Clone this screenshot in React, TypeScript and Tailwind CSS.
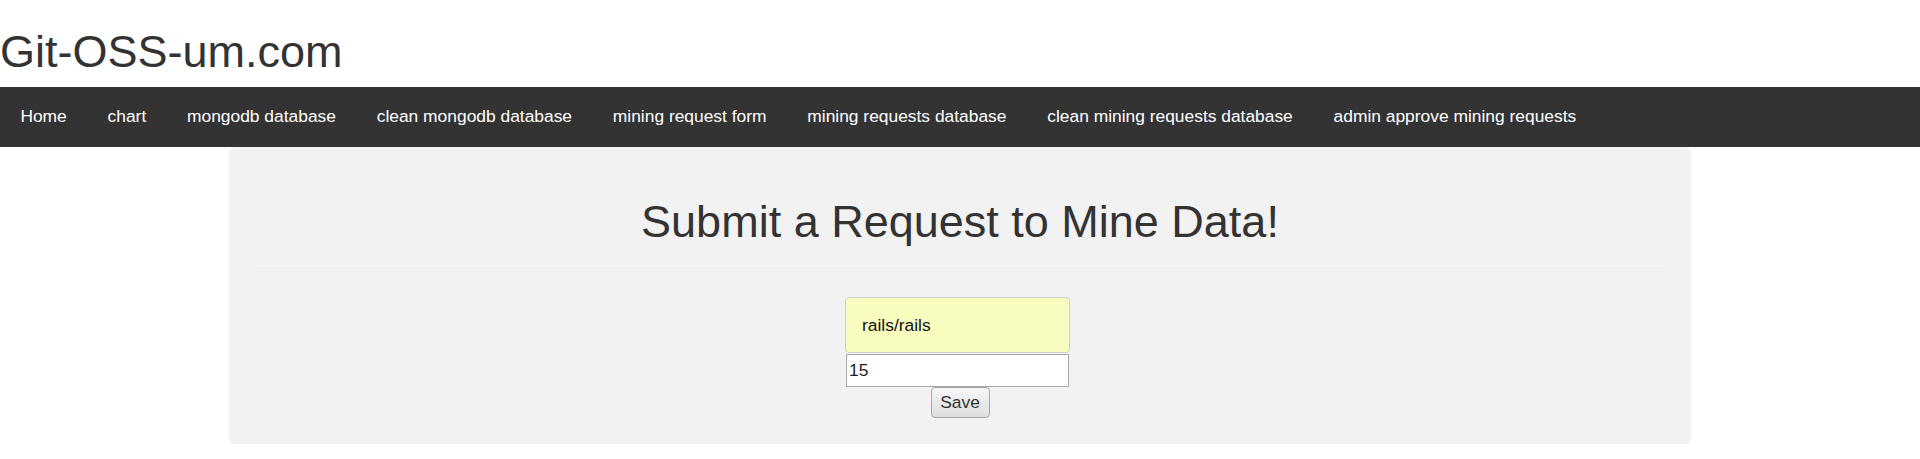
import { useState } from "react";

const links = [
  "Home",
  "chart",
  "mongodb database",
  "clean mongodb database",
  "mining request form",
  "mining requests database",
  "clean mining requests database",
  "admin approve mining requests",
];

export default function App() {
  const [repo, setRepo] = useState("rails/rails");
  const [count, setCount] = useState("15");

  return (
    <div className="min-h-[459px] bg-white font-['Liberation_Sans',Arial,sans-serif] text-[#333]">
      <div className="pt-[27px] pb-[10px]">
        <h1 className="text-[45px] leading-[50px] font-normal">Git-OSS-um.com</h1>
      </div>

      <nav className="flex h-[60px] items-center bg-[#333] pb-[2px]">
        {links.map((l) => (
          <a key={l} href="#" className="px-[20.4px] text-[17.4px] leading-[20px] text-white">
            {l}
          </a>
        ))}
      </nav>

      <div className="mx-auto w-[1462px] rounded-md bg-[#f2f2f2] pt-[50px] pb-[26px]">
        <h2 className="text-center text-[45px] leading-[50px] font-normal text-[#333]">
          Submit a Request to Mine Data!
        </h2>
        <div className="mx-[25px] mt-[24px] mb-[25px] h-px bg-[#ebebeb]" />

        <form className="flex flex-col items-center" onSubmit={(e) => e.preventDefault()}>
          <div className="mr-[5px] flex w-[225px] flex-col items-center">
            <input
              value={repo}
              onChange={(e) => setRepo(e.target.value)}
              className="h-[56px] w-[225px] rounded border border-[#cfcfcf] bg-[#f9fcbf] px-4 text-[17.4px] text-[#111] outline-none"
            />
            <input
              type="text"
              value={count}
              onChange={(e) => setCount(e.target.value)}
              className="mt-px h-[33px] w-[223px] border border-[#a9a9a9] bg-white px-[2px] text-[17.4px] text-[#1d1d2b] outline-none"
            />
          </div>
          <button
            type="submit"
            className="h-[31px] w-[59px] rounded-sm border border-[#a6a6a6] bg-gradient-to-b from-[#f7f7f7] to-[#dedede] text-[17.4px] text-[#333]"
          >
            Save
          </button>
        </form>
      </div>
    </div>
  );
}
